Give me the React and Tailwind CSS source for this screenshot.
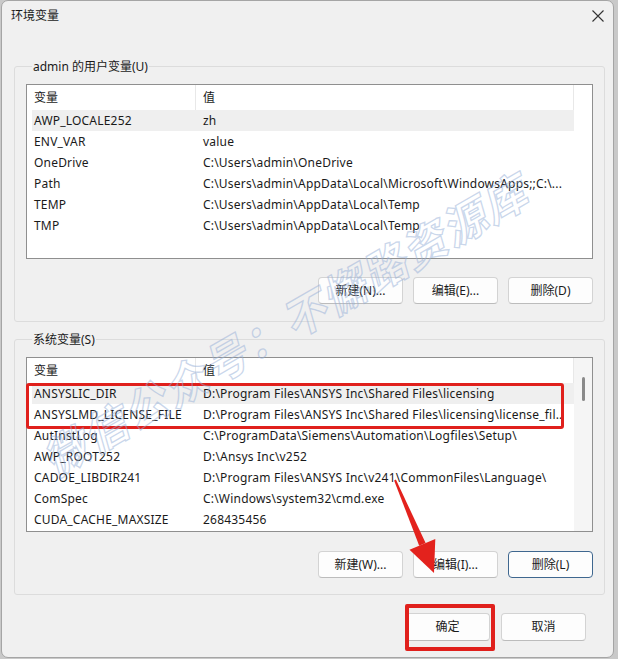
import React from "react";

const userVars = [
  ["AWP_LOCALE252", "zh"],
  ["ENV_VAR", "value"],
  ["OneDrive", "C:\\Users\\admin\\OneDrive"],
  ["Path", "C:\\Users\\admin\\AppData\\Local\\Microsoft\\WindowsApps;;C:\\..."],
  ["TEMP", "C:\\Users\\admin\\AppData\\Local\\Temp"],
  ["TMP", "C:\\Users\\admin\\AppData\\Local\\Temp"],
];

const sysVars = [
  ["ANSYSLIC_DIR", "D:\\Program Files\\ANSYS Inc\\Shared Files\\licensing"],
  ["ANSYSLMD_LICENSE_FILE", "D:\\Program Files\\ANSYS Inc\\Shared Files\\licensing\\license_fil.."],
  ["AutInstLog", "C:\\ProgramData\\Siemens\\Automation\\Logfiles\\Setup\\"],
  ["AWP_ROOT252", "D:\\Ansys Inc\\v252"],
  ["CADOE_LIBDIR241", "D:\\Program Files\\ANSYS Inc\\v241\\CommonFiles\\Language\\"],
  ["ComSpec", "C:\\Windows\\system32\\cmd.exe"],
  ["CUDA_CACHE_MAXSIZE", "268435456"],
];

function ListBox({ rows, scrollbar }) {
  return (
    <div className="relative flex h-[175px] w-[567px] border border-[#8f8f8f] bg-white">
      <div className="flex w-[547px] flex-col pl-[5px]">
        <div className="flex h-[25px] items-center">
          <div className="w-[163px] pl-[2px]">变量</div>
          <div className="flex h-full w-[379px] items-center border-l border-r border-[#e8e8e8] pl-[7px]">值</div>
        </div>
        {rows.map(([k, v], i) => (
          <div
            key={k}
            className={`flex h-[21px] items-center tracking-[0.2px] ${i === 0 ? "bg-[#efefef]" : ""}`}
          >
            <div className="w-[163px] whitespace-nowrap pl-[2px]">{k}</div>
            <div className="w-[379px] overflow-hidden whitespace-nowrap pl-[8px]">{v}</div>
          </div>
        ))}
      </div>
      <div className={`flex w-[18px] justify-center ${scrollbar ? "bg-[#f5f5f5]" : "bg-white"}`}>
        {scrollbar && <div className="mt-[19px] h-[24px] w-[3px] rounded-full bg-[#8a8a8a]" />}
      </div>
    </div>
  );
}

function Btn({ children, accent, className = "" }) {
  return (
    <button
      className={`flex h-[27px] w-[85px] items-center justify-center rounded-[4px] border bg-[#fdfdfd] text-[12px] text-[#1b1b1b] ${
        accent ? "border-[#3f678f]" : "border-[#d3d3d3] border-b-[#bcbcbc]"
      } ${className}`}
    >
      {children}
    </button>
  );
}

function Group({ label, rows, scrollbar, buttons, className = "" }) {
  return (
    <fieldset className={`w-[591px] rounded-[3px] border border-[#dcdcdc] px-[11px] ${className}`}>
      <legend className="ml-[6px] px-[1px] leading-[17px]">{label}</legend>
      <div className="mt-[9px]">
        <ListBox rows={rows} scrollbar={scrollbar} />
      </div>
      {buttons}
    </fieldset>
  );
}

export default function App() {
  return (
    <div className="relative h-[659px] w-[618px] overflow-hidden bg-[#c9c9c9] font-['Noto_Sans','Noto_Sans_CJK_SC',sans-serif] text-[12px] text-[#1a1a1a]">
      <div className="ml-[1px] flex h-[658px] w-[613px] flex-col rounded-[7px] border border-[#a5a5a5] bg-[#f0f0f0]">
        <div className="flex h-[29px] items-center justify-between pl-[9px] pr-[5px]">
          <span className="text-[12px]">环境变量</span>
          <svg width="14" height="14" viewBox="0 0 14 14" className="mr-[3px]">
            <path d="M1.5 1.5 L12.5 12.5 M12.5 1.5 L1.5 12.5" stroke="#333" strokeWidth="1.1" fill="none" />
          </svg>
        </div>

        <Group
          className="ml-[12px] mt-[28px] pb-[17px]"
          label="admin 的用户变量(U)"
          rows={userVars}
          buttons={
            <div className="mt-[18px] flex justify-end gap-[10px]">
              <Btn>新建(N)...</Btn>
              <Btn>编辑(E)...</Btn>
              <Btn>删除(D)</Btn>
            </div>
          }
        />

        <Group
          className="ml-[12px] mt-[9px] pb-[16px]"
          label="系统变量(S)"
          rows={sysVars}
          scrollbar
          buttons={
            <div className="mt-[19px] flex justify-end gap-[10px]">
              <Btn>新建(W)...</Btn>
              <Btn>编辑(I)...</Btn>
              <Btn accent>删除(L)</Btn>
            </div>
          }
        />

        <div className="mr-[27px] mt-[18px] flex justify-end gap-[11px]">
          <Btn className="h-[28px] w-[84px]">确定</Btn>
          <Btn className="h-[28px] w-[84px]">取消</Btn>
        </div>
      </div>

      {/* annotations */}
      <div className="pointer-events-none absolute left-[26px] top-[383px] h-[46px] w-[538px] rounded-[3px] border-[3px] border-[#e0201c]" />
      <div className="pointer-events-none absolute left-[405px] top-[604px] h-[47px] w-[90px] rounded-[2px] border-[4px] border-[#e0201c]" />
      <svg className="pointer-events-none absolute left-0 top-0" width="618" height="659">
        <polygon points="395.9,479.6 394.1,480.4 419.2,545.7 425.6,543" fill="#e3221d" />
        <polygon points="435.3,538.9 409.5,549.7 434,573" fill="#e3221d" />
      </svg>
      <div className="pointer-events-none absolute left-[285px] top-[325px] -translate-x-1/2 -translate-y-1/2 -rotate-[30deg] whitespace-nowrap text-[44px] font-bold italic tracking-[2px] text-transparent [-webkit-text-stroke:1.3px_rgba(150,175,215,0.5)]">
        微信公众号：不懈路资源库
      </div>
    </div>
  );
}
